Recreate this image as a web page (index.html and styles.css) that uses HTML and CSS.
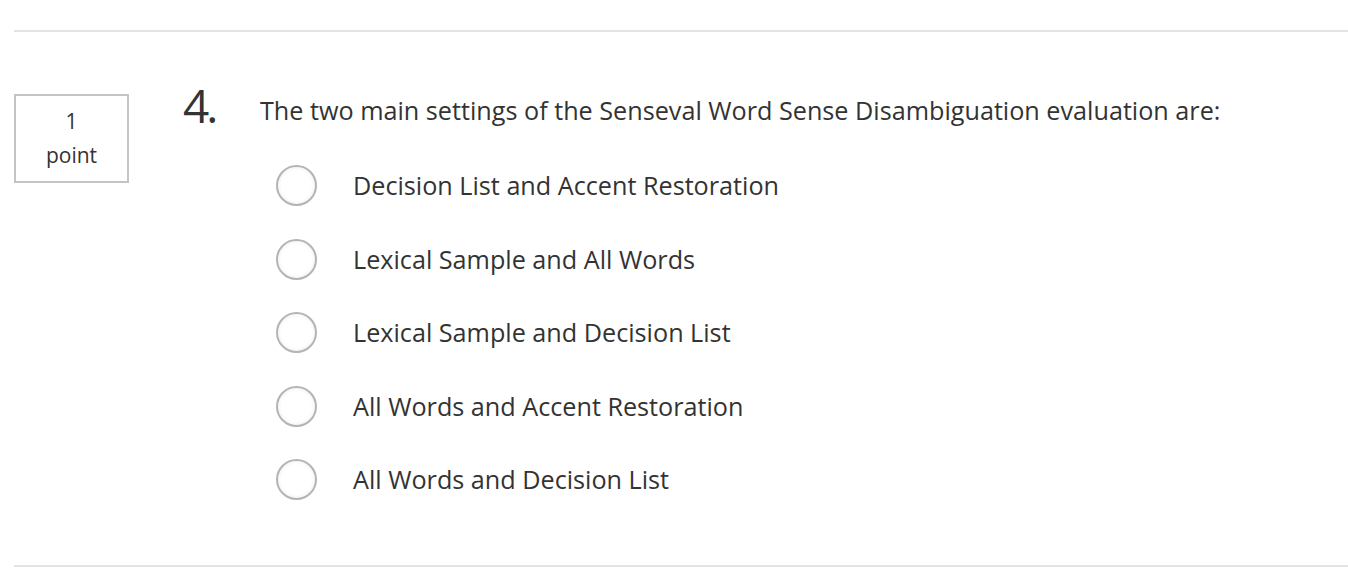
FILE: index.html
```html
<!DOCTYPE html>
<html>
<head>
<meta charset="utf-8">
<link rel="stylesheet" href="styles.css">
</head>
<body>
<div class="page">
  <hr class="rule top">
  <div class="question">
    <div class="points">
      <span>1</span>
      <span>point</span>
    </div>
    <div class="number">4.</div>
    <div class="body">
      <div class="prompt">The two main settings of the Senseval Word Sense Disambiguation evaluation are:</div>
      <ul class="options">
        <li class="option"><span class="radio"></span><span class="label">Decision List and Accent Restoration</span></li>
        <li class="option"><span class="radio"></span><span class="label">Lexical Sample and All Words</span></li>
        <li class="option"><span class="radio"></span><span class="label">Lexical Sample and Decision List</span></li>
        <li class="option"><span class="radio"></span><span class="label">All Words and Accent Restoration</span></li>
        <li class="option"><span class="radio"></span><span class="label">All Words and Decision List</span></li>
      </ul>
    </div>
  </div>
  <hr class="rule bottom">
</div>
</body>
</html>
```
FILE: styles.css
```css
html, body {
  margin: 0;
  padding: 0;
  background: #ffffff;
}
body {
  font-family: "Open Sans", "Liberation Sans", sans-serif;
  color: #333333;
}
.page {
  padding: 30px 0 0 14px;
}
.rule {
  border: 0;
  height: 2px;
  background: #e4e4e4;
  margin: 0;
}
.question {
  display: flex;
  align-items: flex-start;
  padding-top: 62px;
  height: 533px;
  box-sizing: border-box;
}
.points {
  width: 115px;
  height: 89px;
  box-sizing: border-box;
  border: 2px solid #c4c4c4;
  display: flex;
  flex-direction: column;
  align-items: center;
  justify-content: center;
  font-size: 21px;
  line-height: 34px;
  color: #333;
  padding-bottom: 1px;
}
.number {
  margin-left: 54px;
  font-size: 46px;
  line-height: 46px;
  margin-top: -12px;
  letter-spacing: -3px;
  font-weight: 400;
  color: #333;
  width: 77px;
  flex: none;
}
.prompt {
  font-size: 25.2px;
  line-height: 30px;
  margin-top: 1px;
  white-space: nowrap;
}
.options {
  list-style: none;
  margin: 24px 0 0 0;
  padding: 0;
}
.option {
  display: flex;
  align-items: center;
  height: 73.5px;
  margin-left: 16px;
}
.radio {
  width: 41px;
  height: 41px;
  box-sizing: border-box;
  border: 2px solid #b4b4b4;
  border-radius: 50%;
  background: #ffffff;
  box-shadow: inset 0 0 4px rgba(0, 0, 0, 0.08);
  flex: none;
}
.label {
  margin-left: 36px;
  font-size: 25.2px;
  line-height: 30px;
  margin-top: -1px;
}
```
